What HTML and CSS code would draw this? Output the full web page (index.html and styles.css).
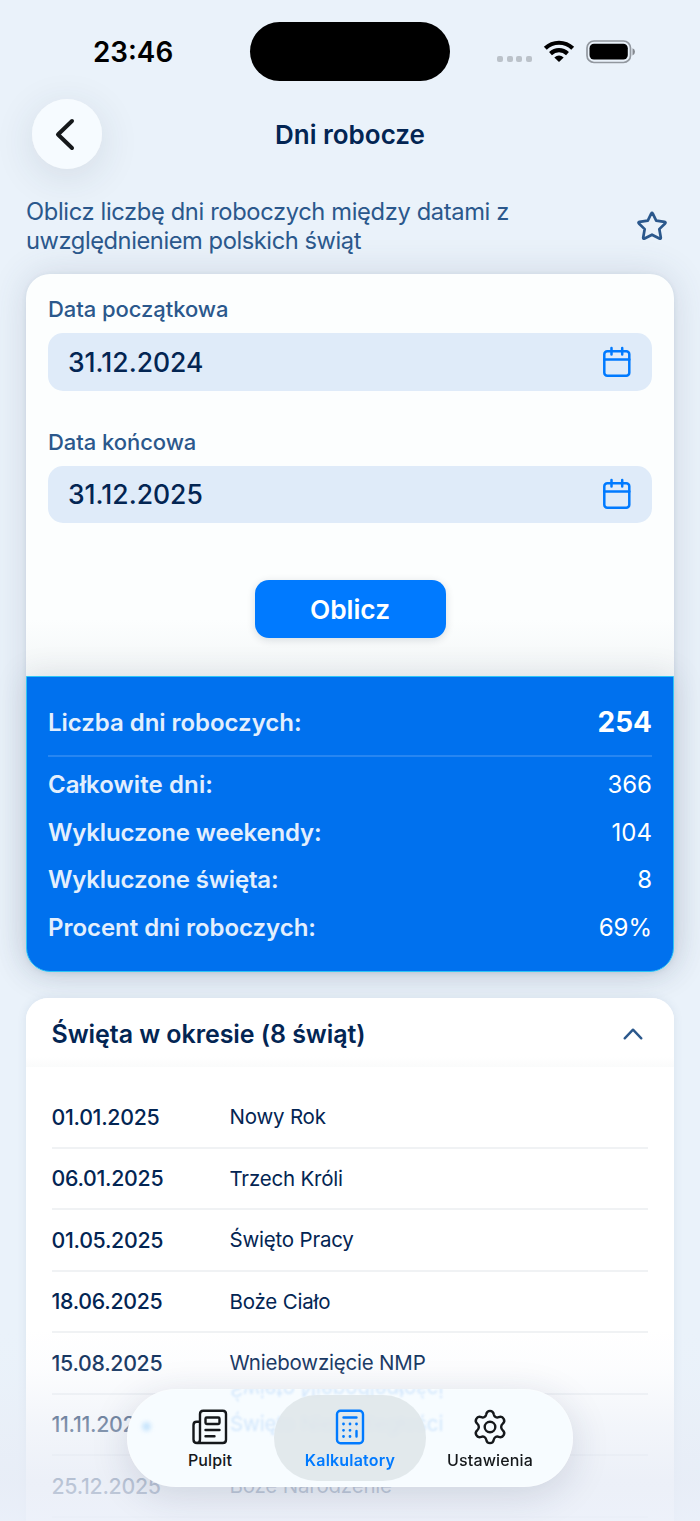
FILE: index.html
```html
<!DOCTYPE html>
<html lang="pl">
<head>
<meta charset="utf-8">
<meta name="viewport" content="width=device-width">
<title>Dni robocze</title>
<link rel="stylesheet" href="styles.css">
</head>
<body>
<div class="screen">
  <header class="status">
    <div class="time">23:46</div>
    <div class="island"></div>
    <div class="indicators">
      <div class="dots"><i></i><i></i><i></i><i></i></div>
      <svg class="wifi" width="32" height="24" viewBox="0 0 32 24"><g fill="none" stroke="#000" stroke-width="4.2"><path d="M2.3 8.2C10 .9 22 .9 29.700 8.200"/><path d="M7.500 13.600C12.400 9 19.600 9 24.500 13.600"/></g><path d="M11.300 17.400Q16 13.600 20.700 17.400L16 22Z"/></svg>
      <svg class="battery" width="50" height="24" viewBox="0 0 50 24"><rect x="1" y="1" width="43.500" height="21.500" rx="7" fill="none" stroke="#92989f" stroke-width="1.700"/><rect x="3.500" y="3.800" width="38.300" height="15.800" rx="4.500"/><path d="M46.500 8.200Q49 9 49 11.700T46.500 15.400Z" fill="#858a90"/></svg>
    </div>
  </header>

  <div class="navbar">
    <button class="back" aria-label="Wstecz"><svg width="36" height="36" viewBox="0 0 36 36" fill="none" stroke="#15181b" stroke-width="4" stroke-linecap="round" stroke-linejoin="round"><path d="M23 5L9 18.500L23 32"/></svg></button>
    <h1 class="title">Dni robocze</h1>
  </div>

  <div class="intro">
    <p>Oblicz liczbę dni roboczych między datami z<br><span class="second-line">uwzględnieniem polskich świąt</span></p>
    <svg class="star" width="30" height="30" viewBox="0 0 30 30" fill="none" stroke="#2b588c" stroke-width="2.700" stroke-linejoin="round"><path d="M14.200 2.600Q15 1.300 15.800 2.600L19.200 9.600L27.500 10.900Q29.100 11.300 28.100 12.500L22.300 18.100L23.800 26.600Q23.900 28.200 22.400 27.500L15 23.700L7.600 27.500Q6.100 28.200 6.200 26.600L7.700 18.100L1.900 12.500Q.9 11.300 2.500 10.900L10.800 9.600Z"/></svg>
  </div>

  <main>
    <section class="card calculator">
      <div class="form">
        <label class="label start">Data początkowa</label>
        <div class="field"><span>31.12.2024</span>
          <svg class="calendar" width="28" height="32" viewBox="0 0 28 32"><g fill="none" stroke="#007aff" stroke-width="2.500" stroke-linecap="round"><rect x="1.300" y="5.300" width="25" height="24.500" rx="3"/><path d="M1.300 13.500H26.300M8.500 2V8.500M19.200 2V8.500"/></g></svg>
        </div>
        <label class="label end">Data końcowa</label>
        <div class="field"><span>31.12.2025</span>
          <svg class="calendar" width="28" height="32" viewBox="0 0 28 32"><g fill="none" stroke="#007aff" stroke-width="2.500" stroke-linecap="round"><rect x="1.300" y="5.300" width="25" height="24.500" rx="3"/><path d="M1.300 13.500H26.300M8.500 2V8.500M19.200 2V8.500"/></g></svg>
        </div>
        <button class="submit">Oblicz</button>
      </div>
      <div class="results">
        <div class="result primary"><b>Liczba dni roboczych:</b><strong>254</strong></div>
        <div class="result"><b class="total">Całkowite dni:</b><span>366</span></div>
        <div class="result"><b class="excluded">Wykluczone weekendy:</b><span>104</span></div>
        <div class="result"><b class="excluded">Wykluczone święta:</b><span>8</span></div>
        <div class="result"><b>Procent dni roboczych:</b><span>69%</span></div>
      </div>
    </section>

    <section class="card holidays">
      <div class="holidays-head"><h2>Święta w okresie (8 świąt)</h2>
        <svg width="20" height="12" viewBox="0 0 20 12" fill="none" stroke="#2b588c" stroke-width="2.400" stroke-linecap="round" stroke-linejoin="round"><path d="M1.700 10.300L10 1.700L18.300 10.300"/></svg>
      </div>
      <div class="list">
        <div class="row"><time>01.01.2025</time><span>Nowy Rok</span></div>
        <div class="row"><time>06.01.2025</time><span>Trzech Króli</span></div>
        <div class="row"><time>01.05.2025</time><span>Święto Pracy</span></div>
        <div class="row"><time>18.06.2025</time><span>Boże Ciało</span></div>
        <div class="row"><time>15.08.2025</time><span>Wniebowzięcie NMP</span></div>
        <div class="row"><time>11.11.2025</time><span>Święto Niepodległości</span></div>
        <div class="row"><time>25.12.2025</time><span>Boże Narodzenie</span></div>
      </div>
    </section>
  </main>

  <div class="fade"></div>

  <nav class="tabs">
    <div class="glass" aria-hidden="true">
      <span class="echo mirrored">Święto Niepodległości</span>
      <span class="echo">Święto Niepodległości</span>
      <i class="spot"></i>
    </div>
    <a class="tab">
      <svg width="36" height="36" viewBox="0 0 36 36" fill="none" stroke="#15181b" stroke-width="2.400" stroke-linecap="round" stroke-linejoin="round"><path d="M8 30.500V5Q8 1.700 11.300 1.700H30.700Q34 1.700 34 5V30.700Q34 34 30.700 34H5Q1.500 34 1.500 30.500V16Q1.500 12.800 4.700 12.800H8M8 30.500Q8 34 4.800 34"/><rect x="13.500" y="8.500" width="14" height="6.500" rx="1.200"/><path d="M13.500 21H27.500M13.500 27.300H22.500"/></svg>
      <span>Pulpit</span>
    </a>
    <a class="tab active">
      <svg width="36" height="36" viewBox="0 0 36 36" fill="none" stroke="#007aff" stroke-width="2.400" stroke-linecap="round" stroke-linejoin="round"><rect x="5" y="1.700" width="26" height="32.500" rx="3.500"/><path d="M11.500 8.500H24.500M24.500 22V27.500"/><path stroke-width="2.800" d="M11.500 15h.01M18 15h.01M24.500 15h.01M11.500 21.300h.01M18 21.300h.01M11.500 27.500h.01M18 27.500h.01"/></svg>
      <span>Kalkulatory</span>
    </a>
    <a class="tab">
      <svg width="36" height="36" viewBox="0 0 36 36" fill="none" stroke="#15181b" stroke-width="2.400" stroke-linejoin="round"><circle cx="18" cy="18" r="5.300"/><path d="M14.200 5.400C15 .7 21 .7 21.800 5.400C22.300 7.800 24.400 9 26.700 8.200C31.200 6.600 34.200 11.800 30.600 14.800C28.700 16.500 28.700 19.500 30.600 21.200C34.200 24.200 31.200 29.400 26.700 27.800C24.400 27 22.300 28.200 21.800 30.600C21 35.300 15 35.300 14.200 30.600C13.700 28.200 11.600 27 9.300 27.800C4.800 29.400 1.800 24.200 5.400 21.200C7.300 19.500 7.300 16.500 5.400 14.800C1.800 11.800 4.800 6.600 9.300 8.200C11.600 9 13.700 7.800 14.200 5.400Z"/></svg>
      <span>Ustawienia</span>
    </a>
  </nav>
</div>
</body>
</html>
```
FILE: styles.css
```css
* { box-sizing: border-box; }
body { margin: 0; font-family: Inter, "Liberation Sans", sans-serif; color: #032553; }
button { border: 0; padding: 0; font: inherit; }
h1, h2, p { margin: 0; }
svg { display: block; flex: none; }

.screen { position: relative; height: 1521px; overflow: hidden; background: #eaf2fa; }

.status { display: grid; grid-template-columns: 250px 200px 250px; height: 99px; padding-top: 22px; }
.time { padding-left: 93px; font-size: 27.800px; font-weight: 600; line-height: 61px; color: #000; }
.island { height: 59px; border-radius: 30px; background: #000; }
.indicators { display: flex; align-items: flex-start; padding: 18px 0 0 46px; }
.dots { display: flex; gap: 3.500px; margin: 16px 11px 0 1px; }
.dots i { width: 6px; height: 6px; border-radius: 2px; background: #bbc2c9; }
.battery { margin-left: 11px; }

.navbar { display: grid; grid-template-columns: 70px 1fr 70px; padding: 0 32px; height: 99px; }
.back { display: grid; place-items: center; width: 70px; height: 70px; border-radius: 50%; background: #f6fbff; box-shadow: 0 8px 40px rgba(40, 55, 75, .12), inset 0 0 1px #fff; }
.back svg { margin-right: 1px; }
.title { font-size: 26px; font-weight: 600; line-height: 71px; text-align: center; }

.intro { display: flex; justify-content: space-between; height: 76px; padding: 0 33px 0 26px; font-size: 23.700px; letter-spacing: -.36px; line-height: 28.700px; color: #2b588c; }
.second-line { letter-spacing: -.44px; }
.star { margin-top: 13px; }

.card { background: #fff; margin: 0 26px; }
.calculator { border-radius: 24px; height: 698px; background: #fcfefe; box-shadow: 0 0 36px rgba(60, 75, 105, .16), 0 1px 5px rgba(60, 80, 115, .1); }
.form { display: flex; flex-direction: column; height: 402px; padding: 20px 22px 0; background: linear-gradient(transparent 86%, #f3f6f7); border-radius: 24px 24px 0 0; }
.label { font-size: 22px; font-weight: 500; line-height: 31px; margin-bottom: 8px; letter-spacing: -.06px; color: #2b588c; }
.label.end { margin-top: 36px; }
.field { display: flex; align-items: center; justify-content: space-between; height: 57.500px; padding: 0 21px 0 20px; border-radius: 15px; background: #dfebf9; font-size: 26.500px; font-weight: 500; }
.submit { align-self: center; margin-top: 57px; width: 191px; height: 58px; border-radius: 14px; background: #007aff; color: #fff; font-size: 26.300px; font-weight: 600; box-shadow: 0 2px 8px rgba(0, 25, 50, .14); }
.results { height: 296px; padding: 14px 21px 0; border: 1.500px solid #2fc5f5; border-radius: 0 0 24px 24px; background: #0071ee; color: #fff; font-size: 24px; box-shadow: 0 0 32px rgba(40, 55, 80, .13); }
.result { display: flex; align-items: center; justify-content: space-between; height: 47.700px; padding-top: 1px; }
.result b { font-weight: 600; color: #e3effd; letter-spacing: -.04px; }
.result b.total { letter-spacing: .1px; }
.result b.excluded { letter-spacing: -.16px; }
.result strong { font-size: 28px; font-weight: 700; }
.result.primary { height: 66px; padding: 0 0 2px; margin-bottom: 3px; border-bottom: 2px solid #2786f1; }

.holidays { margin-top: 26px; height: 600px; border-radius: 22px 22px 0 0; box-shadow: 0 0 10px rgba(60, 90, 130, .1); }
.holidays-head { display: flex; align-items: center; justify-content: space-between; height: 69px; padding: 2px 31px 0 25.500px; border-radius: 22px 22px 0 0; background: linear-gradient(#fff 85%, #fafbfb); }
.holidays h2 { font-size: 25px; font-weight: 600; letter-spacing: -.07px; }
.list { padding: 20px 26px 0 25.500px; }
.row { display: grid; grid-template-columns: 178px 1fr; align-items: center; height: 61.500px; border-bottom: 2px solid #f0f2f4; font-size: 20.500px; letter-spacing: -.2px; }
.row time { font-size: 21.300px; font-weight: 500; letter-spacing: -.28px; }

.fade { position: absolute; left: 0; right: 0; bottom: 0; height: 191px; background: linear-gradient(rgba(233, 238, 248, 0), rgba(233, 238, 248, .13) 20%, rgba(232, 237, 246, .53) 49%, rgba(231, 236, 246, .8) 80%, rgba(234, 239, 249, .86)); }

.tabs { position: absolute; left: 127px; top: 1389px; display: grid; grid-template-columns: repeat(3, 140px); justify-content: center; width: 446px; height: 98px; padding: 6px 0; border-radius: 49px; background: #f7fcff; box-shadow: 0 8px 38px rgba(35, 50, 80, .15), inset 0 0 2px #fff; }
.glass { position: absolute; inset: 0; overflow: hidden; border-radius: 49px; }
.echo { position: absolute; left: 103px; top: 22px; font-size: 20.500px; letter-spacing: -.1px; line-height: 26px; color: #d3e7fc; filter: blur(1px); }
.echo.mirrored { top: -13px; transform: scaleY(-1); }
.spot { position: absolute; left: 15px; top: 33px; width: 9px; height: 9px; border-radius: 50%; background: #c7e4fc; filter: blur(2px); }
.tab { position: relative; display: flex; flex-direction: column; align-items: center; width: 152px; height: 86px; justify-self: center; margin: 0 -6px; padding-top: 14px; border-radius: 43px; font-size: 16px; font-weight: 500; letter-spacing: .15px; color: #15181b; }
.tab span { margin-top: 4px; line-height: 22px; }
.tab.active { background: rgba(222, 229, 232, .84); color: #007aff; font-weight: 600; letter-spacing: .2px; backdrop-filter: blur(2px); }
```
